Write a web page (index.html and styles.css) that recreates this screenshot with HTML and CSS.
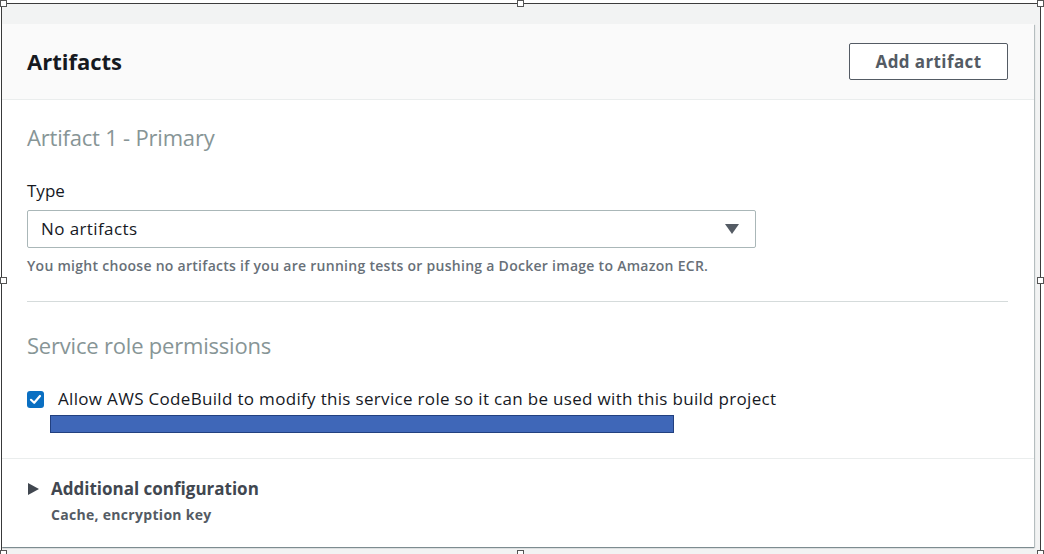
FILE: index.html
```html
<!DOCTYPE html>
<html lang="en">
<head>
<meta charset="utf-8">
<title>Artifacts</title>
<link rel="stylesheet" href="styles.css">
</head>
<body>
<div class="frame">
  <span class="handle h-tl"></span>
  <span class="handle h-tm"></span>
  <span class="handle h-tr"></span>
  <span class="handle h-ml"></span>
  <span class="handle h-mr"></span>
  <span class="handle h-bl"></span>
  <span class="handle h-bm"></span>
  <span class="handle h-br"></span>

  <div class="panel">
    <div class="panel-header">
      <h2 class="panel-title">Artifacts</h2>
      <button class="btn">Add artifact</button>
    </div>

    <div class="panel-body">
      <h3 class="sub-heading">Artifact 1 - Primary</h3>
      <div class="field-label">Type</div>
      <div class="select">
        <span class="select-value">No artifacts</span>
        <svg class="select-caret" width="14" height="10" viewBox="0 0 14 10"><path d="M0 0 H14 L7 10 Z" fill="#545b64"/></svg>
      </div>
      <div class="hint">You might choose no artifacts if you are running tests or pushing a Docker image to Amazon ECR.</div>

      <div class="divider"></div>

      <h3 class="sub-heading second">Service role permissions</h3>
      <div class="check-row">
        <span class="checkbox">
          <svg width="17" height="17" viewBox="0 0 17 17"><path d="M4 8.8 L7.2 11.8 L13 5" fill="none" stroke="#fff" stroke-width="2.2" stroke-linecap="round" stroke-linejoin="round"/></svg>
        </span>
        <span class="check-label">Allow AWS CodeBuild to modify this service role so it can be used with this build project</span>
      </div>
      <div class="redact"></div>
    </div>

    <div class="panel-footer">
      <div class="expander">
        <svg class="expander-caret" width="11" height="12" viewBox="0 0 11 12"><path d="M0 0 L11 6 L0 12 Z" fill="#414750"/></svg>
        <span class="expander-title">Additional configuration</span>
      </div>
      <div class="expander-desc">Cache, encryption key</div>
    </div>
  </div>
</div>
</body>
</html>
```

FILE: styles.css
```css
* { box-sizing: border-box; }

html, body {
  margin: 0;
  padding: 0;
  background: #ffffff;
}

body {
  width: 1044px;
  height: 554px;
  overflow: hidden;
  font-family: "Open Sans", "Noto Sans", "Liberation Sans", sans-serif;
  color: #16191f;
}

.frame {
  position: relative;
  margin: 3px 0 0 1px;
  width: 1040px;
  height: 551px;
  background: #f2f3f3;
  border-top: 1px solid #3c3c3c;
  border-left: 1px solid #3c3c3c;
  border-right: 1px solid #3c3c3c;
  padding: 20px 0 0 0;
}

.handle {
  position: absolute;
  width: 7px;
  height: 7px;
  background: #ffffff;
  border: 1px solid #555;
}
.h-tl { left: -2px; top: -4px; }
.h-tm { left: 515px; top: -4px; }
.h-tr { left: 1035px; top: -4px; }
.h-ml { left: -2px; top: 273px; }
.h-mr { left: 1035px; top: 273px; }
.h-bl { left: -2px; top: 546px; }
.h-bm { left: 515px; top: 546px; }
.h-br { left: 1035px; top: 546px; }

.panel {
  width: 1032px;
  height: 523px;
  background: #ffffff;
  display: flex;
  flex-direction: column;
  box-shadow: 0 1px 1px 0 rgba(0, 28, 36, 0.35), 1px 1px 1px 0 rgba(0, 28, 36, 0.2);
}

.panel-header {
  height: 76px;
  background: #fafafa;
  border-bottom: 1px solid #eaeded;
  display: flex;
  align-items: center;
  justify-content: space-between;
  padding: 0 26px 1px 25px;
}

.panel-title {
  margin: 0;
  font-size: 22px;
  font-weight: 700;
  line-height: 28px;
  color: #16191f;
}

.btn {
  width: 159px;
  height: 37px;
  background: #ffffff;
  border: 1px solid #545b64;
  border-radius: 2px;
  font-family: inherit;
  font-size: 17px;
  font-weight: 700;
  letter-spacing: 0.4px;
  color: #545b64;
  padding: 0;
}

.panel-body {
  display: flex;
  flex-direction: column;
  padding: 0 26px 0 25px;
}

.sub-heading {
  margin: 23px 0 0 0;
  font-size: 22px;
  font-weight: 400;
  letter-spacing: -0.2px;
  line-height: 28px;
  color: #879596;
}
.sub-heading.second { margin-top: 29px; }

.field-label {
  margin-top: 29px;
  font-size: 17px;
  line-height: 22px;
  color: #16191f;
}

.select {
  margin-top: 8px;
  width: 729px;
  height: 38px;
  border: 1px solid #aab7b8;
  border-radius: 2px;
  display: flex;
  align-items: center;
  justify-content: space-between;
  padding: 0 16px 0 13px;
}

.select-value {
  font-size: 17px;
  line-height: 22px;
  letter-spacing: 0.4px;
  color: #16191f;
}

.hint {
  margin-top: 9px;
  font-size: 14px;
  font-weight: 600;
  letter-spacing: 0.28px;
  line-height: 18px;
  color: #687078;
}

.divider {
  margin-top: 26px;
  height: 1px;
  background: #d5dbdb;
}

.check-row {
  margin-top: 29px;
  display: flex;
  align-items: center;
  gap: 14px;
  height: 22px;
}

.checkbox {
  width: 17px;
  height: 17px;
  border-radius: 3px;
  background: #0a6fc2;
  display: flex;
}

.check-label {
  font-size: 17px;
  line-height: 22px;
  letter-spacing: 0.32px;
  color: #16191f;
}

.redact {
  margin: 5px 0 0 23px;
  width: 624px;
  height: 18px;
  background: #3f67b8;
  border: 1px solid #22407f;
}

.panel-footer {
  margin-top: 25px;
  border-top: 1px solid #eaeded;
  padding: 18px 26px 0 26px;
  display: flex;
  flex-direction: column;
}

.expander {
  display: flex;
  align-items: center;
  gap: 12px;
  height: 24px;
}

.expander-title {
  font-size: 17px;
  font-weight: 700;
  line-height: 24px;
  color: #414750;
}

.expander-desc {
  margin: 5px 0 0 23px;
  font-size: 14px;
  font-weight: 700;
  letter-spacing: 0.3px;
  line-height: 18px;
  color: #545b64;
}
```
